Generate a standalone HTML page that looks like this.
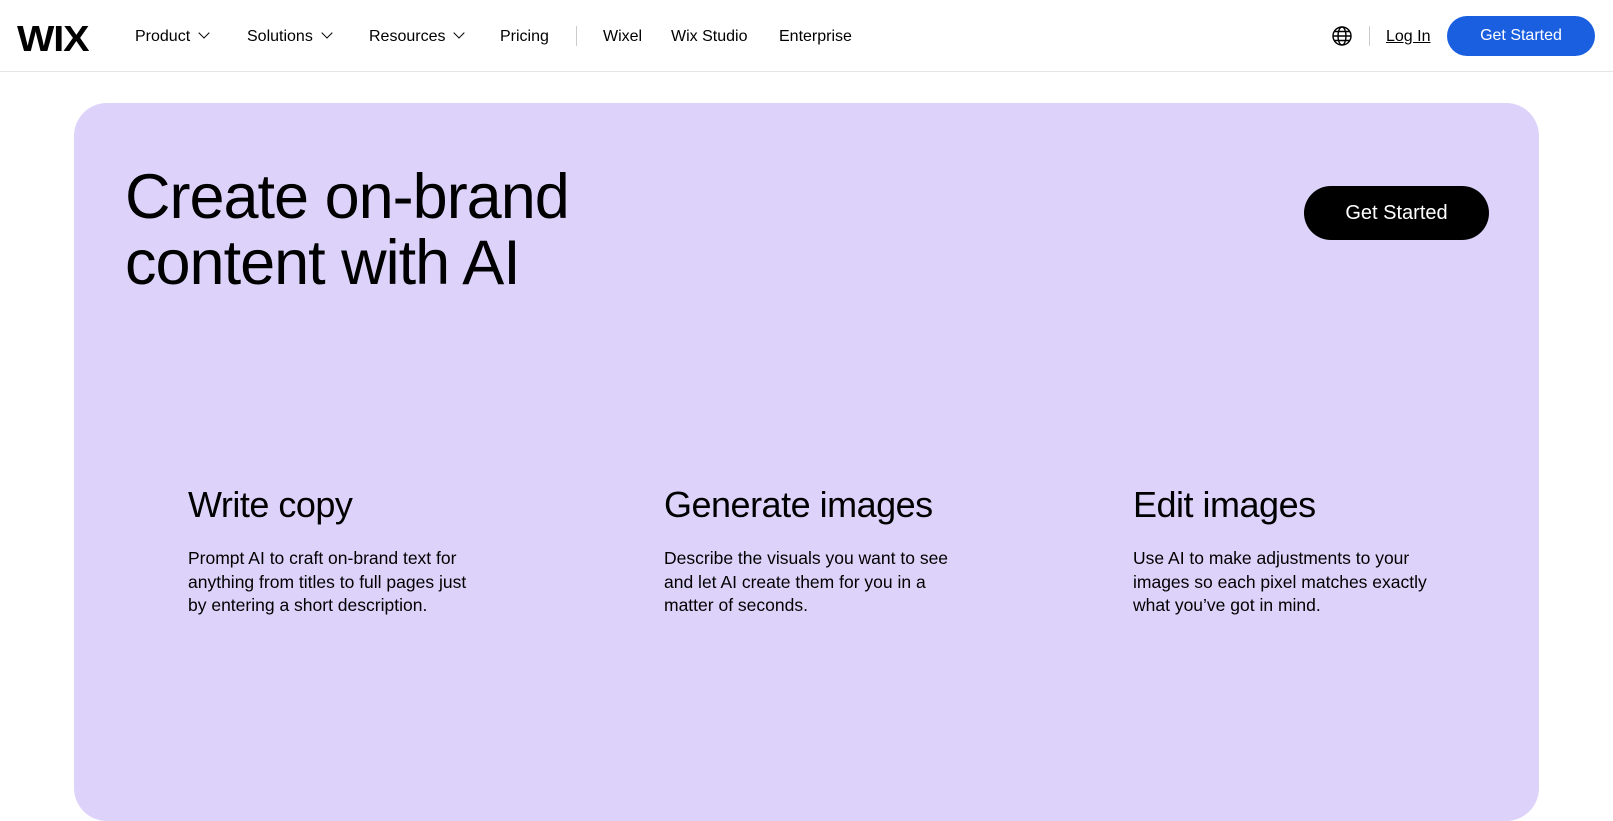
<!DOCTYPE html>
<html><head><style>
*{margin:0;padding:0;box-sizing:border-box}
body{width:1613px;height:821px;overflow:hidden;background:#fff;font-family:"Liberation Sans",Arial,sans-serif;color:#000;position:relative}
.nav{position:absolute;left:0;top:0;width:1613px;height:72px;border-bottom:1px solid #e5e5e5}
.a{position:absolute;top:28px;font-size:16px;white-space:nowrap}
.chev{display:inline-block;width:8px;height:8px;border-right:1.5px solid #000;border-bottom:1.5px solid #000;transform:rotate(45deg);margin-left:10px;position:relative;top:-4px}
.card{position:absolute;left:74px;top:103px;width:1465px;height:718px;background:#ddd3fa;border-radius:33px}
h1{position:absolute;left:125px;top:164px;font-weight:400;font-size:63px;line-height:66px;letter-spacing:-1px}
.btn{position:absolute;left:1304px;top:186px;width:185px;height:54px;background:#000;color:#fff;border-radius:27px;font-size:20px;text-align:center;line-height:54px}
h2{position:absolute;top:484px;font-weight:400;font-size:36px;letter-spacing:-0.5px}
p{position:absolute;top:547px;font-size:17.5px;line-height:23.6px;width:296px}
</style></head><body>
<div class="nav">
<div style="position:absolute;left:17px;top:18px;font-size:36px;font-weight:700;letter-spacing:-1px;transform:scaleX(1.1);transform-origin:left">WIX</div>
<div class="a" style="left:135px">Product<span class="chev"></span></div>
<div class="a" style="left:247px">Solutions<span class="chev"></span></div>
<div class="a" style="left:369px">Resources<span class="chev"></span></div>
<div class="a" style="left:500px">Pricing</div>
<div style="position:absolute;left:576px;top:26px;width:1px;height:20px;background:#ccc"></div>
<div class="a" style="left:603px">Wixel</div>
<div class="a" style="left:671px">Wix Studio</div>
<div class="a" style="left:779px">Enterprise</div>
<svg style="position:absolute;left:1332px;top:26px" width="20" height="20" viewBox="0 0 20 20" fill="none" stroke="#000" stroke-width="1.4"><circle cx="10" cy="10" r="9"/><ellipse cx="10" cy="10" rx="4" ry="9"/><path d="M1 10h18M2.5 5.5h15M2.5 14.5h15"/></svg>
<div style="position:absolute;left:1369px;top:26px;width:1px;height:20px;background:#ccc"></div>
<div class="a" style="left:1386px;text-decoration:underline">Log In</div>
<div style="position:absolute;left:1447px;top:16px;width:148px;height:40px;background:#1a5fe0;border-radius:20px;color:#fff;font-size:16px;text-align:center;line-height:40px">Get Started</div>
</div>
<div class="card"></div>
<h1>Create on-brand<br>content with AI</h1>
<div class="btn">Get Started</div>
<h2 style="left:188px">Write copy</h2>
<h2 style="left:664px">Generate images</h2>
<h2 style="left:1133px">Edit images</h2>
<p style="left:188px">Prompt AI to craft on-brand text for anything from titles to full pages just by entering a short description.</p>
<p style="left:664px">Describe the visuals you want to see and let AI create them for you in a matter of seconds.</p>
<p style="left:1133px">Use AI to make adjustments to your images so each pixel matches exactly what you’ve got in mind.</p>
</body></html>
